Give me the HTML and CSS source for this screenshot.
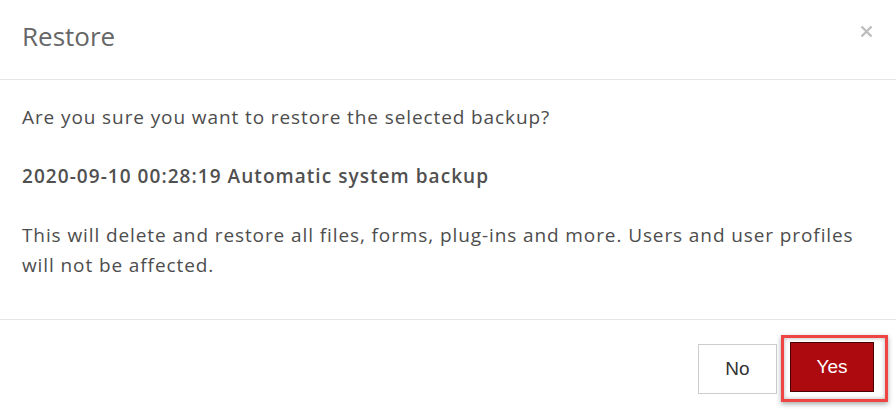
FILE: index.html
```html
<!DOCTYPE html>
<html>
<head>
<meta charset="utf-8">
<link rel="stylesheet" href="styles.css">
</head>
<body>
<div class="modal">
  <div class="modal-header">
    <h1 class="modal-title">Restore</h1>
    <button class="close" aria-label="Close">
      <svg width="13" height="13" viewBox="0 0 13 13"><path d="M1.5 1.5 L11.5 11.5 M11.5 1.5 L1.5 11.5" stroke="#bdbdbd" stroke-width="2.4" stroke-linecap="butt"/></svg>
    </button>
  </div>
  <div class="modal-body">
    <p class="para">Are you sure you want to restore the selected backup?</p>
    <p class="para strong">2020-09-10 00:28:19 Automatic system backup</p>
    <p class="para last">This will delete and restore all files, forms, plug-ins and more. Users and user profiles will not be affected.</p>
  </div>
  <div class="modal-footer">
    <button class="btn btn-no">No</button>
    <span class="focus-ring"><button class="btn btn-yes">Yes</button></span>
  </div>
</div>
</body>
</html>
```

FILE: styles.css
```css
* { box-sizing: border-box; }
html, body { margin: 0; padding: 0; background: #fff; }
body { width: 896px; height: 416px; overflow: hidden; font-family: "Open Sans", "Liberation Sans", sans-serif; }

.modal { width: 896px; }

.modal-header {
  height: 80px;
  border-bottom: 1px solid #e5e5e5;
  display: flex;
  justify-content: space-between;
  align-items: flex-start;
  padding: 23px 23px 0 22px;
}
.modal-title {
  margin: 0;
  font-size: 26px;
  line-height: 26px;
  font-weight: 500;
  color: #666666;
}
.close {
  border: 0;
  background: none;
  padding: 0;
  margin-top: 2px;
  width: 13px;
  height: 13px;
  display: block;
}
.close svg { display: block; }

.modal-body {
  padding: 22px 22px 39px 22px;
  border-bottom: 1px solid #e5e5e5;
}
.para {
  margin: 0 0 29px 0;
  font-size: 19px;
  line-height: 30px;
  letter-spacing: 0.9px;
  color: #4d4d4d;
}
.para.strong { font-weight: 600; letter-spacing: 1.05px; color: #505050; }
.para.last { margin-bottom: 0; }

.modal-footer {
  display: flex;
  justify-content: flex-end;
  align-items: center;
  padding: 15px 8px 0 0;
}
.btn {
  font-family: "Liberation Sans", Arial, sans-serif;
  font-size: 19px;
  height: 50px;
  padding: 0;
  cursor: pointer;
}
.btn-no {
  width: 79px;
  background: #fff;
  border: 1px solid #cccccc;
  color: #333;
  margin-right: 4px;
}
.focus-ring {
  display: block;
  border: 3px solid #ef4444;
  padding: 4px 11px 7px 6px;
  box-shadow: 0 2px 5px rgba(0,0,0,0.35), inset 0 0 4px rgba(0,0,0,0.3);
}
.btn-yes {
  display: block;
  width: 84px;
  background: #ad0a10;
  border: 1px solid #4a0000;
  color: #fff;
}
```
